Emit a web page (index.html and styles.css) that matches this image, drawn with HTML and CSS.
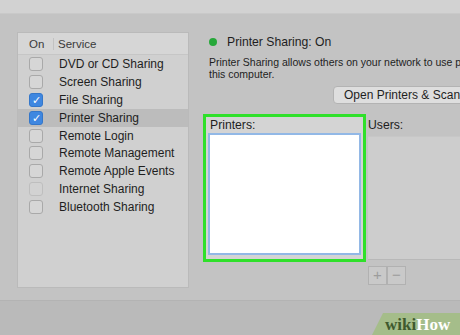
FILE: index.html
```html
<!DOCTYPE html>
<html lang="en">
<head>
    <meta charset="UTF-8">
    <title>Sharing - Printer Sharing</title>
    <link rel="stylesheet" href="styles.css">
</head>
<body>
    <div class="top-band"></div>

    <div class="main">
        <!-- Lista de servicios -->
        <div class="services">
            <div class="services-head">
                <span class="col-on">On</span>
                <span class="col-service">Service</span>
            </div>
            <div class="row"><span class="check"></span>DVD or CD Sharing</div>
            <div class="row"><span class="check"></span>Screen Sharing</div>
            <div class="row"><span class="check on">&#10003;</span>File Sharing</div>
            <div class="row selected"><span class="check on">&#10003;</span>Printer Sharing</div>
            <div class="row"><span class="check"></span>Remote Login</div>
            <div class="row"><span class="check"></span>Remote Management</div>
            <div class="row"><span class="check"></span>Remote Apple Events</div>
            <div class="row"><span class="check faint"></span>Internet Sharing</div>
            <div class="row"><span class="check"></span>Bluetooth Sharing</div>
        </div>

        <!-- Detalle -->
        <div class="detail">
            <div class="status"><span class="dot"></span>Printer Sharing: On</div>
            <p class="desc">Printer Sharing allows others on your network to use printers connected to this computer.</p>
            <div class="btn-row"><button class="btn">Open Printers &amp; Scanners Preferences...</button></div>

            <div class="lists">
                <div class="printers">
                    <div class="label">Printers:</div>
                    <div class="printer-list"></div>
                </div>
                <div class="users">
                    <div class="label">Users:</div>
                    <div class="user-list"></div>
                    <div class="pm">
                        <span class="pm-btn">+</span><span class="pm-btn">&minus;</span>
                    </div>
                </div>
            </div>
        </div>
    </div>

    <div class="bottom-band">
        <div class="wikihow"><span class="wiki">wiki</span><span class="how">How</span></div>
    </div>
</body>
</html>
```

FILE: styles.css
```css
body {
    margin: 0;
    width: 460px;
    height: 335px;
    overflow: hidden;
    background-color: #c3c3c3;
    font-family: "Liberation Sans", Arial, sans-serif;
    color: #1e1e1e;
}
.top-band {
    height: 13px;
    background-color: #d2d2d2;
    border-bottom: 1px solid #c9c9c9;
}
.main {
    display: flex;
    height: 286px;
    padding-top: 18px;
    box-sizing: border-box;
    overflow: hidden;
}
/* Lista de servicios */
.services {
    flex: none;
    margin-left: 17px;
    width: 172px;
    height: 256px;
    background-color: #d0d0d0;
    border: 1px solid #bababa;
    box-sizing: border-box;
}
.services-head {
    display: flex;
    height: 21px;
    align-items: center;
    background-color: #d6d6d6;
    border-bottom: 1px solid #c6c6c6;
    font-size: 11.5px;
    color: #3a3a3a;
}
.col-on {
    width: 36px;
    padding-left: 11px;
    box-sizing: border-box;
    border-right: 1px solid #c2c2c2;
}
.col-service {
    padding-left: 4px;
}
.row {
    display: flex;
    align-items: center;
    height: 17.9px;
    font-size: 12px;
}
.row.selected {
    background-color: #bcbcbc;
}
.check {
    width: 12px;
    height: 12px;
    margin-left: 11px;
    margin-right: 16px;
    border: 1px solid #a9a9a9;
    border-radius: 3px;
    background-color: #d6d6d6;
    font-size: 11px;
    line-height: 12px;
    text-align: center;
    color: white;
}
.check.on {
    background-color: #3f87e0;
    border-color: #3577c9;
}
.check.faint {
    border-color: #bebebe;
    background-color: #d2d2d2;
}
/* Detalle */
.detail {
    flex: none;
    width: 251px;
    margin-left: 20px;
}
.status {
    display: flex;
    align-items: center;
    font-size: 12.2px;
    height: 18px;
    margin-top: 1px;
    white-space: nowrap;
}
.dot {
    width: 8px;
    height: 8px;
    border-radius: 50%;
    background-color: #27a83a;
    margin-right: 10px;
}
.desc {
    margin: 5px 0 0 0;
    width: 360px;
    font-size: 10.5px;
    line-height: 12px;
}
.btn-row {
    margin-top: 5px;
    padding-left: 124px;
    white-space: nowrap;
}
.btn {
    height: 18px;
    padding: 0 10px;
    border: 1px solid #b3b3b3;
    border-radius: 4px;
    background-color: #dedede;
    font-family: "Liberation Sans", Arial, sans-serif;
    font-size: 12px;
    color: #1e1e1e;
    white-space: nowrap;
}
.lists {
    display: flex;
    margin-top: 10px;
    margin-left: -6px;
}
.printers {
    flex: none;
    width: 163px;
    height: 148px;
    border: 3px solid #2fe02a;
    box-sizing: border-box;
    background-color: #d4d4d4;
    padding: 0 2px 2px 2px;
}
.label {
    font-size: 12.2px;
    height: 16px;
    line-height: 16px;
    padding-left: 2px;
}
.printer-list {
    height: 122px;
    background-color: white;
    border: 2px solid #92b8e6;
    box-sizing: border-box;
}
.users {
    flex: none;
    width: 100px;
    margin-left: 2px;
    padding-top: 3px;
}
.users .label {
    padding-left: 0;
}
.user-list {
    margin-top: 3px;
    height: 122px;
    background-color: #cdcdcd;
    border-top: 1px solid #c7c7c7;
    border-bottom: 1px solid #b8b8b8;
}
.pm {
    display: flex;
    margin-top: 6px;
}
.pm-btn {
    width: 19px;
    height: 19px;
    border: 1px solid #b1b1b1;
    box-sizing: border-box;
    background-color: #c9c9c9;
    color: #9c9c9c;
    font-size: 15px;
    line-height: 16px;
    text-align: center;
}
/* Franja inferior */
.bottom-band {
    height: 35px;
    background-color: #bababa;
    border-top: 1px solid #b3b3b3;
    box-sizing: border-box;
    display: flex;
    justify-content: flex-end;
    align-items: flex-end;
}
.wikihow {
    width: 88px;
    height: 22px;
    background-color: #a5bd8a;
    clip-path: polygon(11px 0, 100% 0, 100% 100%, 0 100%);
    font-family: "Liberation Serif", "Times New Roman", serif;
    font-weight: bold;
    font-size: 17px;
    line-height: 23px;
    padding-left: 13px;
    box-sizing: border-box;
    white-space: nowrap;
}
.wiki {
    color: #3f5a2e;
}
.how {
    color: white;
}
```
